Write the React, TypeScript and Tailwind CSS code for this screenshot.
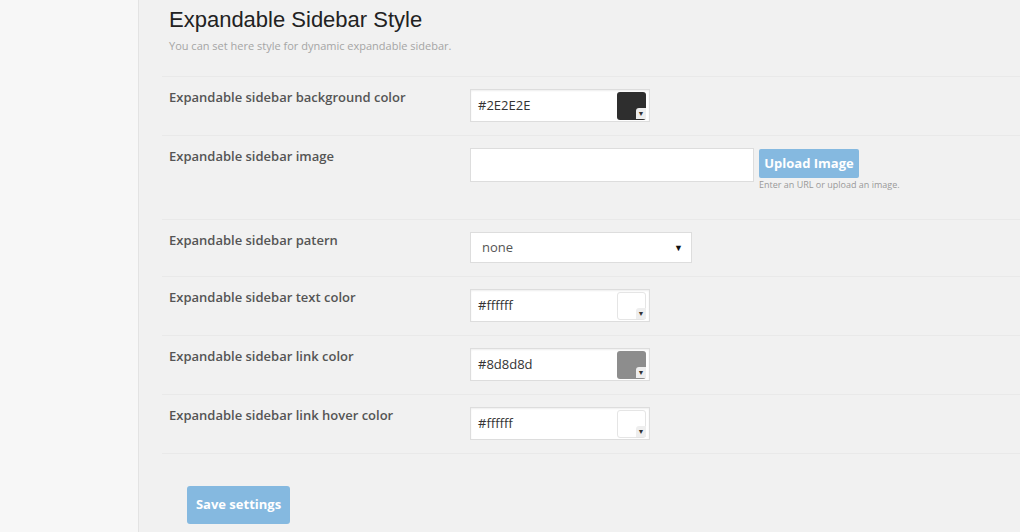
import React from "react";

const font = { fontFamily: "'Open Sans', sans-serif" };

function Swatch({ color, white }: { color: string; white?: boolean }) {
  return (
    <div className="relative w-[180px] h-[33px] bg-white border border-[#dddddd] shadow-[inset_0_1px_2px_rgba(0,0,0,0.07)] flex items-center">
      <span className="pl-[7px] text-[13px] text-[#333]">{color}</span>
      <div
        className={`absolute right-[3px] top-[2px] w-[29px] h-[28px] rounded-[3px] ${white ? "border border-[#e5e5e5]" : ""}`}
        style={{ backgroundColor: color }}
      />
      <div className="absolute right-[3px] bottom-[2px] w-[10px] h-[11px] bg-[#eeeeee] rounded-tl-[3px] flex items-center justify-center">
        <span className="text-[7px] leading-none text-[#333]">▼</span>
      </div>
    </div>
  );
}

function Row({ label, children, cls }: { label: string; children: React.ReactNode; cls?: string }) {
  return (
    <div className={`flex border-t border-[#e9e9e9] ${cls ?? "h-[59px]"}`}>
      <div className="w-[308px] pl-[7px] pt-[11px] text-[13px] font-semibold text-[#555]">{label}</div>
      <div className="pt-3">{children}</div>
    </div>
  );
}

export default function App() {
  return (
    <div className="flex w-[1020px] h-[532px] overflow-hidden bg-[#f1f1f1]" style={font}>
      <div className="w-[139px] shrink-0 bg-[#f7f7f7] border-r border-[#e3e3e3]" />
      <div className="flex-1 pl-[23px]">
        <h2 className="pl-[7px] pt-[6px] text-[22px] leading-[28px] text-[#222]" style={{ fontFamily: "'Liberation Sans', Arial, sans-serif" }}>
          Expandable Sidebar Style
        </h2>
        <p className="pl-[7px] mt-[4px] text-[11px] leading-[16px] text-[#a5a5a5]">You can set here style for dynamic expandable sidebar.</p>
        <div className="mt-[22px] border-b border-[#e9e9e9]">
          <Row label="Expandable sidebar background color">
            <Swatch color="#2E2E2E" />
          </Row>
          <Row label="Expandable sidebar image" cls="h-[84px]">
            <div className="flex items-start gap-[5px]">
              <div className="w-[284px] h-[34px] bg-white border border-[#dddddd]" />
              <div>
                <button className="mt-[1px] w-[100px] h-[29px] rounded-[2px] bg-[#85b9e0] text-white text-[13px] font-bold">
                  Upload Image
                </button>
                <div className="mt-[1px] text-[9px] leading-[12px] text-[#999]">Enter an URL or upload an image.</div>
              </div>
            </div>
          </Row>
          <Row label="Expandable sidebar patern" cls="h-[57px]">
            <div className="w-[222px] h-[31px] bg-white border border-[#dddddd] flex items-center justify-between pl-[11px] pr-[8px]">
              <span className="text-[13px] text-[#555]">none</span>
              <span className="text-[9px] text-[#111]">▼</span>
            </div>
          </Row>
          <Row label="Expandable sidebar text color">
            <Swatch color="#ffffff" white />
          </Row>
          <Row label="Expandable sidebar link color">
            <Swatch color="#8d8d8d" />
          </Row>
          <Row label="Expandable sidebar link hover color">
            <Swatch color="#ffffff" white />
          </Row>
        </div>
        <button className="ml-[25px] mt-[32px] w-[103px] h-[38px] rounded-[3px] bg-[#85b9e0] text-white text-[13px] font-bold">
          Save settings
        </button>
      </div>
    </div>
  );
}
